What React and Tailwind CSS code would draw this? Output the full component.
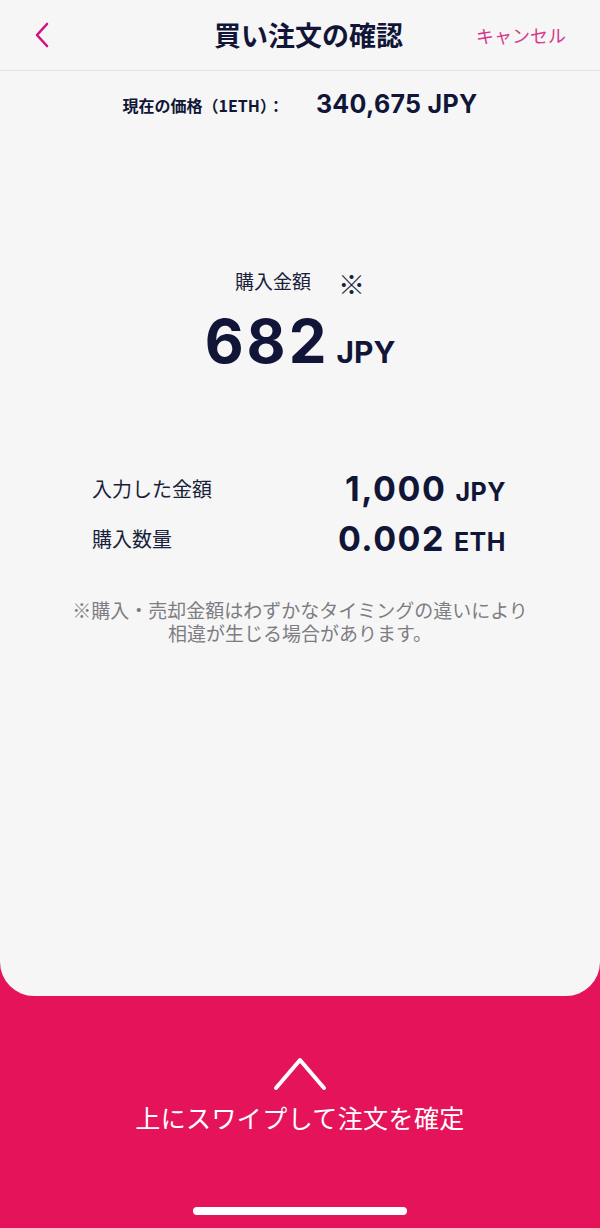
import React from "react";

const jp = { fontFamily: '"Noto Sans CJK JP", "Noto Sans", sans-serif' };
const num = { fontFamily: 'Inter, "Noto Sans CJK JP", sans-serif' };

const Row = ({ label, value, unit }) => (
  <div className="flex items-center justify-between h-[50px]">
    <span className="text-[20px] text-[#1a1f3a]" style={jp}>
      {label}
    </span>
    <span className="flex items-baseline text-[#111638]" style={num}>
      <span className="text-[34px] font-bold tracking-[1.5px]">{value}</span>
      <span className="text-[25px] font-bold ml-[9px] tracking-[0.5px]">{unit}</span>
    </span>
  </div>
);

export default function App() {
  return (
    <div className="w-[600px] h-[1228px] flex flex-col bg-[#e5135a] overflow-hidden">
      {/* Card */}
      <div className="h-[996px] bg-[#f6f6f6] rounded-b-[34px] flex flex-col">
        {/* Header */}
        <div className="h-[71px] flex items-center pl-[30px] pr-[34px] border-b border-[#e2e2e2]">
          <svg width="22" height="26" viewBox="0 0 22 26" className="ml-[2px] shrink-0">
            <path
              d="M15 2 L5 13 L15 24"
              fill="none"
              stroke="#d2137d"
              strokeWidth="2.6"
              strokeLinecap="round"
              strokeLinejoin="round"
            />
          </svg>
          <h1
            className="text-[27px] font-bold text-[#111638] ml-[160px]"
            style={jp}
          >
            買い注文の確認
          </h1>
          <button className="text-[18px] text-[#d53a8e] ml-auto" style={jp}>
            キャンセル
          </button>
        </div>

        {/* Current price */}
        <div className="flex items-center justify-center mt-[15px] text-[#111638]">
          <span className="text-[16px] font-bold" style={jp}>
            現在の価格（1ETH）：
          </span>
          <span className="text-[25px] font-bold ml-[32px] tracking-[0.3px]" style={num}>
            340,675 JPY
          </span>
        </div>

        {/* Purchase amount */}
        <div className="flex flex-col items-center mt-[144px]">
          <span className="flex items-center h-[28px] text-[19px] text-[#1a1f3a]" style={jp}>
            購入金額
            <span className="ml-[27px] text-[27px] leading-none mt-[3px]">※</span>
          </span>
          <div className="flex items-baseline text-[#111638] mt-[12px]" style={num}>
            <span className="text-[60px] font-bold leading-[66px] tracking-[3px]">682</span>
            <span className="text-[30px] font-bold ml-[7px]">JPY</span>
          </div>
        </div>

        {/* Details */}
        <div className="ml-[92px] mr-[94px] mt-[89px]">
          <Row label="入力した金額" value="1,000" unit="JPY" />
          <Row label="購入数量" value="0.002" unit="ETH" />
        </div>

        <p
          className="text-center text-[19px] leading-[23px] text-[#7d7d82] mt-[34px]"
          style={jp}
        >
          ※購入・売却金額はわずかなタイミングの違いにより
          <br />
          相違が生じる場合があります。
        </p>
      </div>

      {/* Swipe area */}
      <div className="flex-1 flex flex-col items-center">
        <svg width="54" height="34" viewBox="0 0 54 34" className="mt-[61px]">
          <path
            d="M3 31 L27 3 L51 31"
            fill="none"
            stroke="#ffffff"
            strokeWidth="4"
            strokeLinecap="round"
            strokeLinejoin="round"
          />
        </svg>
        <span className="text-[25px] text-white mt-[8px] tracking-[0.4px]" style={jp}>
          上にスワイプして注文を確定
        </span>
        <div className="w-[214px] h-[8px] rounded-full bg-white mt-[70px]" />
      </div>
    </div>
  );
}
